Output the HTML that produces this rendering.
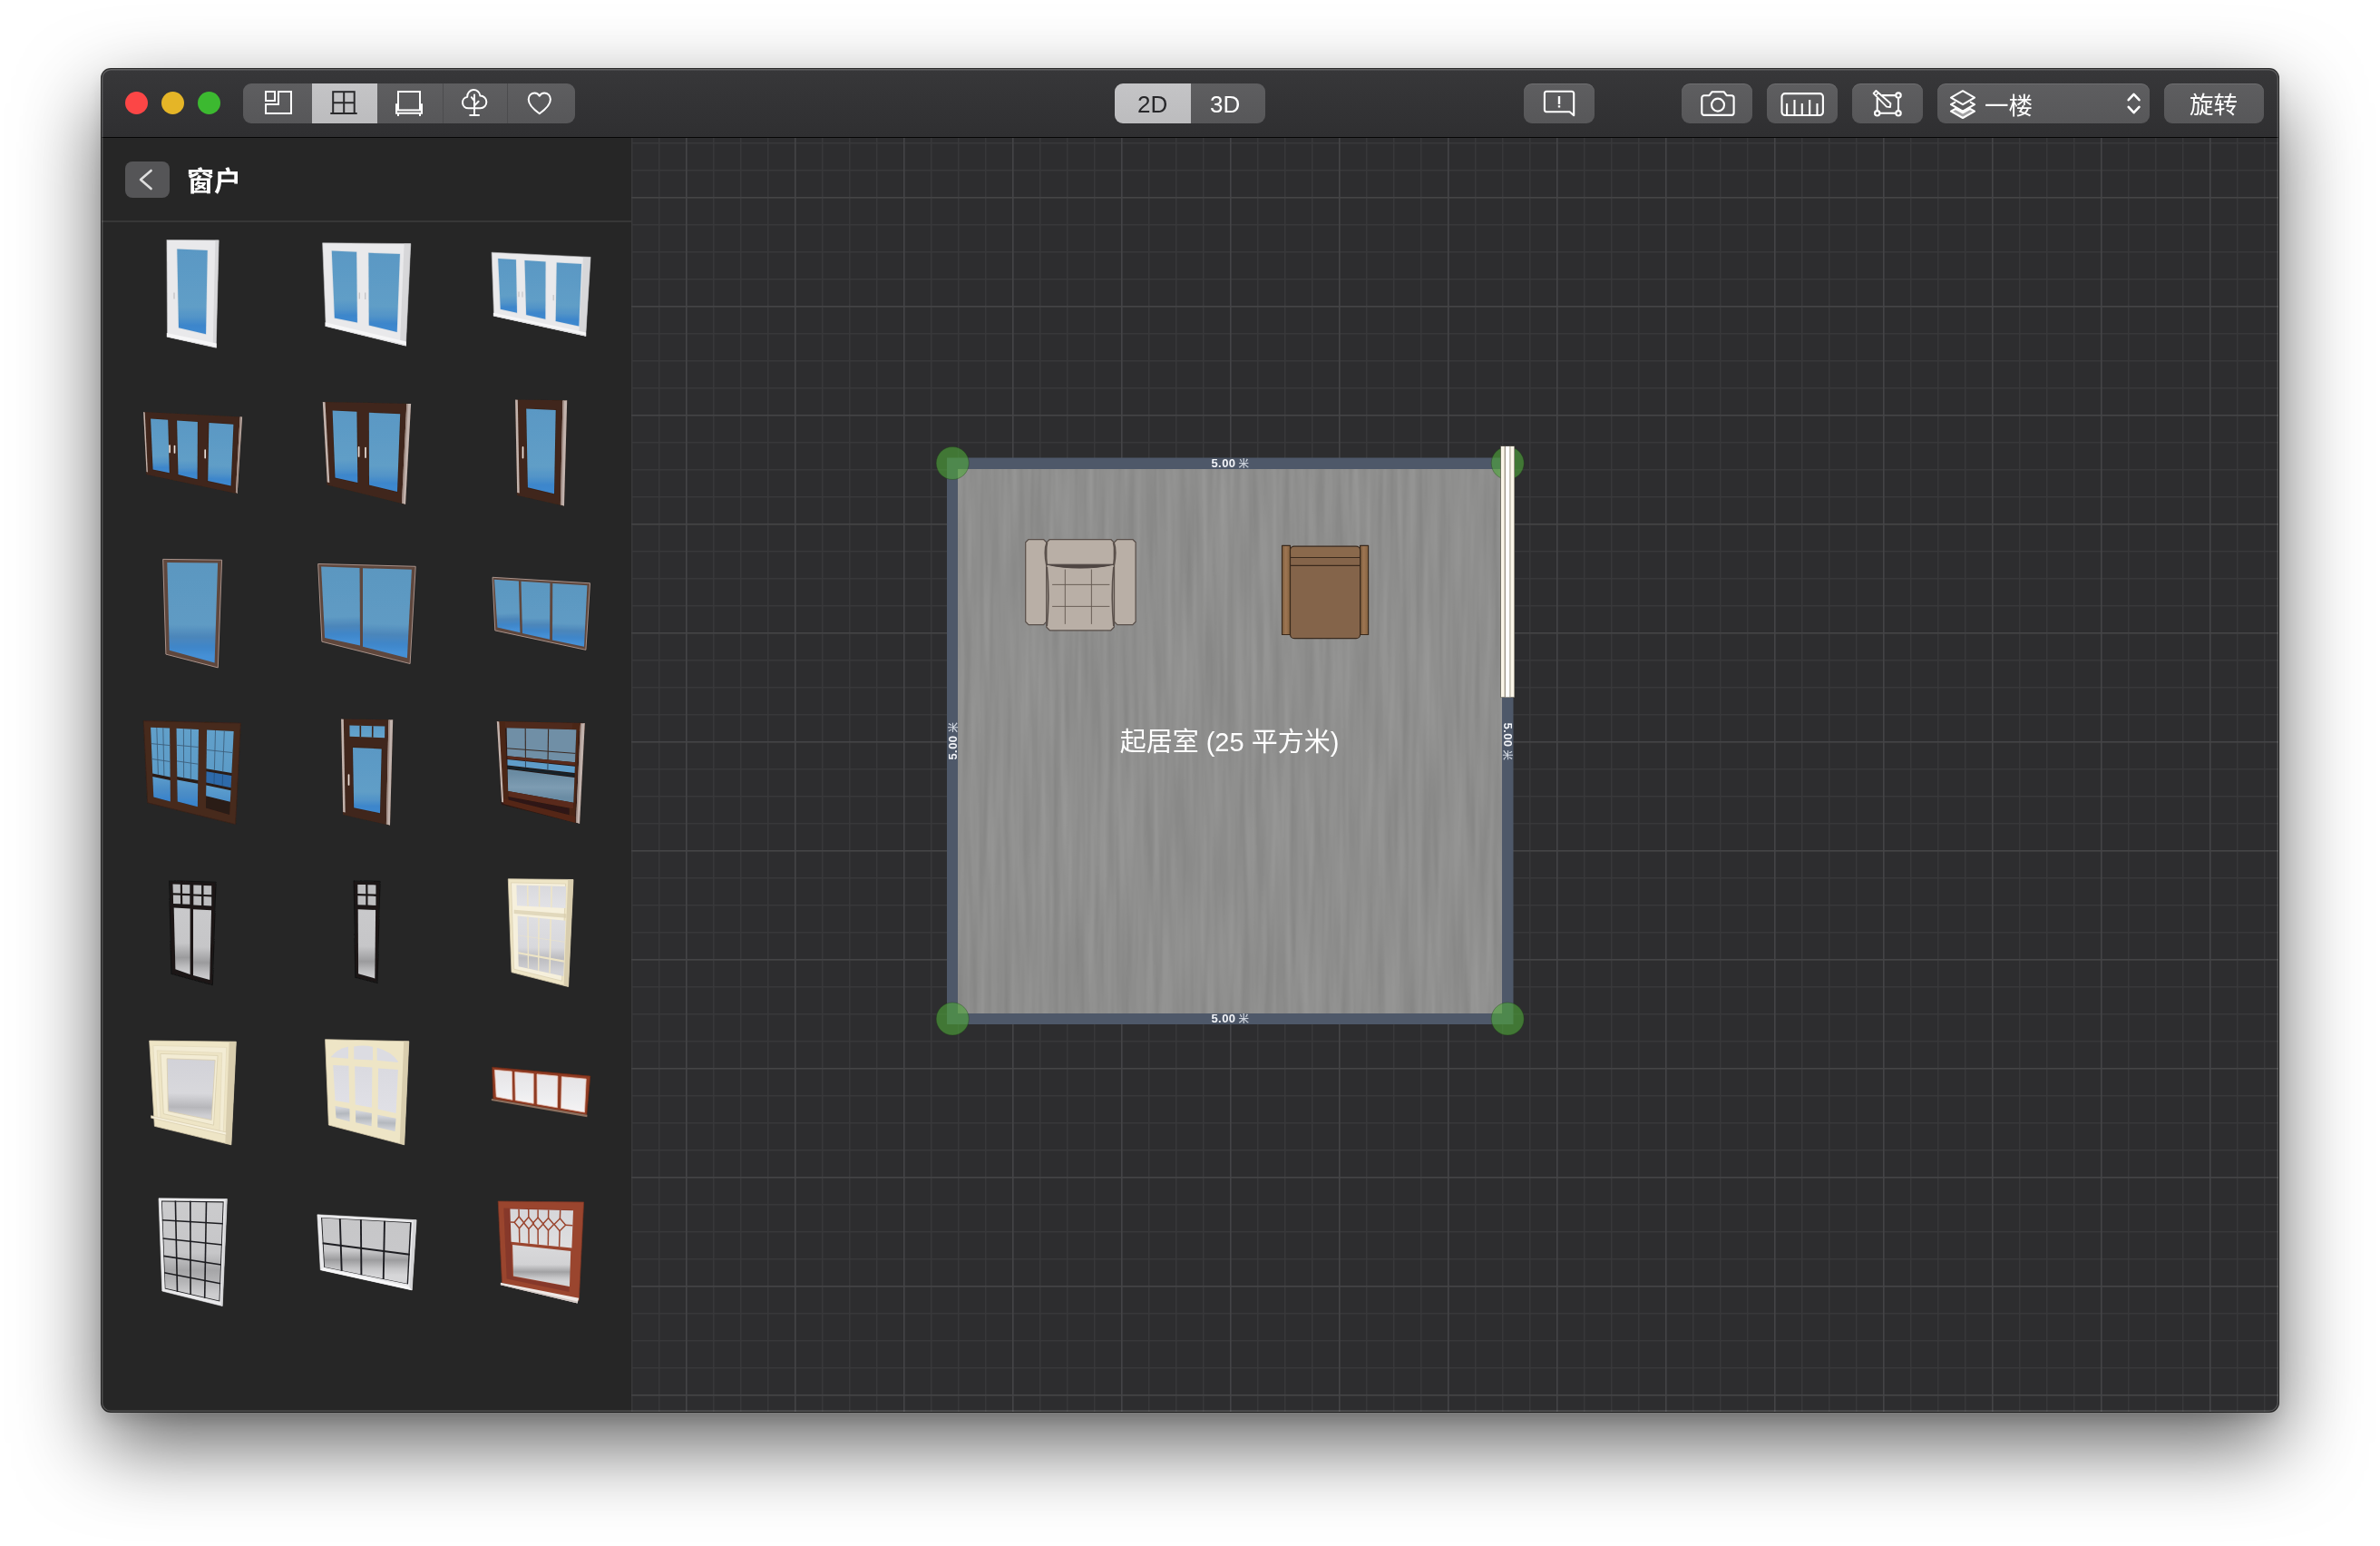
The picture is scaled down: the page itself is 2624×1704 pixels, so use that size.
<!DOCTYPE html>
<html lang="zh-CN">
<head>
<meta charset="utf-8">
<title>窗户</title>
<style>
html,body{margin:0;padding:0;background:#fff;}
body{width:2624px;height:1704px;position:relative;overflow:hidden;
  font-family:"Liberation Sans","Noto Sans CJK SC",sans-serif;color:#fff;}
#win{position:absolute;left:112px;top:76px;width:2400px;height:1480px;border-radius:10px;
  background:#2d2d2f;overflow:hidden;
  box-shadow:0 0 0 1px rgba(0,0,0,.82),0 36px 90px rgba(0,0,0,.62),0 8px 16px rgba(0,0,0,.10);}
/* page-coordinate layer: children use absolute page coords */
.pg{position:absolute;left:-112px;top:-76px;width:2624px;height:1704px;}
.abs{position:absolute;}
/* toolbar */
#tb{position:absolute;left:112px;top:76px;width:2400px;height:75px;
  background:linear-gradient(#373739,#2f2f31);border-bottom:1.3px solid #060606;}
.tl{position:absolute;width:25px;height:25px;border-radius:50%;top:101px;}
.btn{position:absolute;top:92px;height:44px;border-radius:9px;background:linear-gradient(#5e5e60,#575759);box-shadow:inset 0 1px 0 rgba(255,255,255,.10);}
.seg{position:absolute;top:92px;height:44px;background:linear-gradient(#5e5e60,#575759);}
.seg.on{background:linear-gradient(#c4c4c6,#bcbcbe);}
.btn svg,.seg svg{position:absolute;left:0;top:0;overflow:visible;}
.t26{font-size:26px;line-height:44px;position:absolute;top:1px;will-change:transform;white-space:nowrap;}
/* sidebar */
#sb{position:absolute;left:112px;top:152px;width:584px;height:1404px;background:#262626;}
#sbsep{position:absolute;left:112px;top:243px;width:584px;height:2px;background:#373737;}
#back{position:absolute;left:138px;top:178px;width:49px;height:40px;border-radius:8px;background:#555557;}
#sbt{position:absolute;left:206px;top:178px;font-size:30px;line-height:44px;font-weight:700;
  font-family:"Liberation Sans","Noto Sans CJK SC",sans-serif;color:#fff;white-space:nowrap;will-change:transform;}
/* canvas */
#cv{position:absolute;left:696px;top:152px;width:1816px;height:1404px;background:#2d2d2f;}

#edge{position:absolute;left:0;top:0;width:2400px;height:1480px;border-radius:10px;box-shadow:inset 0 0 0 1.4px rgba(255,255,255,.2);pointer-events:none;}

</style>
</head>
<body>
<div id="win">
<div class="pg">
<div id="cv"></div>
<svg class="abs" style="left:696px;top:152px;will-change:transform" width="1816" height="1404" viewBox="696 152 1816 1404">
  <defs>
    <pattern id="gmin" x="756" y="217" width="30" height="30" patternUnits="userSpaceOnUse">
      <path d="M0 0.5H30M0.5 0V30" stroke="#38383a" stroke-width="1.8" fill="none"/>
    </pattern>
    <pattern id="gmaj" x="756" y="217" width="120" height="120" patternUnits="userSpaceOnUse">
      <path d="M0 0.5H120M0.5 0V120" stroke="#444446" stroke-width="2" fill="none"/>
    </pattern>
    <filter id="wood" x="0" y="0" width="100%" height="100%" color-interpolation-filters="sRGB">
      <feTurbulence type="fractalNoise" baseFrequency="0.13 0.006" numOctaves="2" seed="11" result="n"/>
      <feColorMatrix in="n" type="matrix" values="0.095 0 0 0 0.511  0.095 0 0 0 0.511  0.095 0 0 0 0.507  0 0 0 0 1"/>
    </filter>
    <linearGradient id="armg" x1="0" x2="1" y1="0" y2="0"><stop offset="0" stop-color="#80603f"/><stop offset=".45" stop-color="#9d7552"/><stop offset="1" stop-color="#84623f"/></linearGradient>
  </defs>
  <rect x="696" y="152" width="1816" height="1404" fill="url(#gmin)"/>
  <rect x="696" y="152" width="1816" height="1404" fill="url(#gmaj)"/>
  <!-- room -->
  <rect x="1044" y="504.5" width="624.5" height="624.5" fill="#4e5869"/>
  <!-- floor texture -->
  <rect x="1056" y="517" width="600" height="600" fill="#8f8f8e"/>
  <rect x="1056" y="517" width="600" height="600" filter="url(#wood)" opacity="1"/>
  <!-- corner handles -->
  <g fill="#4fa83b" fill-opacity=".6" stroke="#1c3a14" stroke-opacity=".35" stroke-width="1">
    <circle cx="1050.2" cy="510.5" r="18"/>
    <circle cx="1662.2" cy="510.5" r="18"/>
    <circle cx="1050.2" cy="1123" r="18"/>
    <circle cx="1662.2" cy="1123" r="18"/>
  </g>
  <!-- window in right wall -->
  <g>
    <rect x="1654.2" y="491.6" width="15.8" height="277.2" fill="#6e6a5e"/>
    <rect x="1655" y="492" width="14.3" height="276.2" fill="#fbf6e9"/>
    <rect x="1658.7" y="492" width="1.2" height="276.2" fill="#857f70"/>
    <rect x="1659.9" y="492" width="4.6" height="276.2" fill="#ffffff"/>
    <rect x="1664.4" y="492" width="1.1" height="276.2" fill="#aaa394"/>
  </g>
  <!-- armchair (beige) -->
  <g fill="#b9afa6" stroke="#5a504b" stroke-width="1.25" stroke-linejoin="round">
    <path d="M1134 594.5H1150.5L1153.8 597.8V685.3L1150.5 688.6H1134L1130.7 685.3V597.8Z"/>
    <path d="M1231.8 594.5H1248.8L1252.1 597.8V685.3L1248.8 688.6H1231.8L1228.5 685.3V597.8Z"/>
    <path d="M1157.3 594.5H1224.8L1228.3 598V691.3L1224.8 694.8H1157.3L1153.8 691.3V598Z"/>
    <path d="M1154 622.4C1152 612 1152 604 1154.4 598M1228.1 622.4C1230.1 612 1230.1 604 1227.7 598" fill="none" stroke-width="2.2"/>
    <path d="M1154.2 622.2H1227.9C1206 627.4 1176 627.4 1154.2 622.2Z" fill="#4e4542" stroke="#4e4542" stroke-width="1"/>
    <path d="M1154.3 625C1156.3 645 1156.3 668 1154.3 690M1227.8 625C1225.8 645 1225.8 668 1227.8 690" fill="none" stroke-width="1.6"/>
    <path d="M1174.3 628V687.5M1203.4 628V687.5M1160.5 644.4H1223M1160.5 668.4H1223" fill="none" stroke="#62574f" stroke-width="0.9" stroke-linecap="round"/>
  </g>
  <!-- chair (brown) -->
  <g stroke="#3a291c" stroke-width="1.2" stroke-linejoin="round">
    <rect x="1413.5" y="601.3" width="9" height="98.2" fill="url(#armg)"/>
    <rect x="1499.6" y="601.3" width="9" height="98.2" fill="url(#armg)"/>
    <rect x="1422.5" y="602.2" width="77.1" height="101.5" rx="4.5" fill="#84644a"/>
    <path d="M1422.5 614.5H1499.6M1422.5 623.4H1499.6" fill="none"/>
  </g>
  <rect x="1423.2" y="603" width="75.7" height="11" rx="3.5" fill="#8e6c4e" opacity=".6"/>
  <!-- dimension labels -->
  <g font-family="'Liberation Sans','Noto Sans CJK SC',sans-serif" font-weight="700" font-size="13" letter-spacing=".45" fill="#f2f4f8" text-anchor="middle">
    <text x="1356.5" y="515">5.00 <tspan font-size="11.5" font-weight="500" fill="#cdd3dc" dx="-1">米</tspan></text>
    <text x="1356.5" y="1127.4">5.00 <tspan font-size="11.5" font-weight="500" fill="#cdd3dc" dx="-1">米</tspan></text>
    <text transform="translate(1054.6 816.5) rotate(-90)">5.00 <tspan font-size="11.5" font-weight="500" fill="#cdd3dc" dx="-1">米</tspan></text>
    <text transform="translate(1657.8 817.5) rotate(90)">5.00 <tspan font-size="11.5" font-weight="500" fill="#cdd3dc" dx="-1">米</tspan></text>
  </g>
  <text x="1355.5" y="827.8" font-family="'Liberation Sans','Noto Sans CJK SC',sans-serif" font-weight="400" font-size="29" fill="#fff" text-anchor="middle">起居室 (25 平方米)</text>

</svg>
</div>

<div class="pg">
<div id="sb"></div>
<div id="sbsep"></div>
<div id="back"><svg width="49" height="40"><path d="M28.6 10 L17 20 L28.6 30" fill="none" stroke="#dedede" stroke-width="2.6" stroke-linecap="round" stroke-linejoin="round"/></svg></div>
<div id="sbt">窗户</div>
</div>

<div class="pg"><svg class="abs" style="left:112px;top:244px" width="584" height="1312" viewBox="112 244 584 1312"><defs><linearGradient id="g1" gradientUnits="userSpaceOnUse" x1="212" y1="275.3" x2="212" y2="364.7"><stop offset="0" stop-color="#5a98c4"/><stop offset="0.7" stop-color="#609ec7"/><stop offset="0.84" stop-color="#5193c8"/><stop offset="0.93" stop-color="#3d86cb"/><stop offset="1" stop-color="#3e88cf"/></linearGradient><linearGradient id="g2" gradientUnits="userSpaceOnUse" x1="379.5" y1="277.1" x2="381.4" y2="353.1"><stop offset="0" stop-color="#5a98c4"/><stop offset="0.7" stop-color="#609ec7"/><stop offset="0.84" stop-color="#5193c8"/><stop offset="0.93" stop-color="#3d86cb"/><stop offset="1" stop-color="#3e88cf"/></linearGradient><linearGradient id="g3" gradientUnits="userSpaceOnUse" x1="423.7" y1="279.4" x2="422.3" y2="362.2"><stop offset="0" stop-color="#5a98c4"/><stop offset="0.7" stop-color="#609ec7"/><stop offset="0.84" stop-color="#5193c8"/><stop offset="0.93" stop-color="#3d86cb"/><stop offset="1" stop-color="#3e88cf"/></linearGradient><linearGradient id="g4" gradientUnits="userSpaceOnUse" x1="559" y1="285.6" x2="560.9" y2="342.8"><stop offset="0" stop-color="#5a98c4"/><stop offset="0.7" stop-color="#609ec7"/><stop offset="0.84" stop-color="#5193c8"/><stop offset="0.93" stop-color="#3d86cb"/><stop offset="1" stop-color="#3e88cf"/></linearGradient><linearGradient id="g5" gradientUnits="userSpaceOnUse" x1="590" y1="287.8" x2="590.8" y2="349.4"><stop offset="0" stop-color="#5a98c4"/><stop offset="0.7" stop-color="#609ec7"/><stop offset="0.84" stop-color="#5193c8"/><stop offset="0.93" stop-color="#3d86cb"/><stop offset="1" stop-color="#3e88cf"/></linearGradient><linearGradient id="g6" gradientUnits="userSpaceOnUse" x1="627.5" y1="290.2" x2="625.5" y2="356.8"><stop offset="0" stop-color="#5a98c4"/><stop offset="0.7" stop-color="#609ec7"/><stop offset="0.84" stop-color="#5193c8"/><stop offset="0.93" stop-color="#3d86cb"/><stop offset="1" stop-color="#3e88cf"/></linearGradient><linearGradient id="g7" gradientUnits="userSpaceOnUse" x1="175.6" y1="462.2" x2="177.7" y2="519.3"><stop offset="0" stop-color="#5a98c4"/><stop offset="0.7" stop-color="#609ec7"/><stop offset="0.84" stop-color="#5193c8"/><stop offset="0.93" stop-color="#3d86cb"/><stop offset="1" stop-color="#3e88cf"/></linearGradient><linearGradient id="g8" gradientUnits="userSpaceOnUse" x1="206.5" y1="464.3" x2="207" y2="525.7"><stop offset="0" stop-color="#5a98c4"/><stop offset="0.7" stop-color="#609ec7"/><stop offset="0.84" stop-color="#5193c8"/><stop offset="0.93" stop-color="#3d86cb"/><stop offset="1" stop-color="#3e88cf"/></linearGradient><linearGradient id="g9" gradientUnits="userSpaceOnUse" x1="243.9" y1="466.8" x2="241.9" y2="532.8"><stop offset="0" stop-color="#5a98c4"/><stop offset="0.7" stop-color="#609ec7"/><stop offset="0.84" stop-color="#5193c8"/><stop offset="0.93" stop-color="#3d86cb"/><stop offset="1" stop-color="#3e88cf"/></linearGradient><linearGradient id="g10" gradientUnits="userSpaceOnUse" x1="380" y1="453.1" x2="381.9" y2="529.2"><stop offset="0" stop-color="#5a98c4"/><stop offset="0.7" stop-color="#609ec7"/><stop offset="0.84" stop-color="#5193c8"/><stop offset="0.93" stop-color="#3d86cb"/><stop offset="1" stop-color="#3e88cf"/></linearGradient><linearGradient id="g11" gradientUnits="userSpaceOnUse" x1="424" y1="455.6" x2="422.5" y2="538.2"><stop offset="0" stop-color="#5a98c4"/><stop offset="0.7" stop-color="#609ec7"/><stop offset="0.84" stop-color="#5193c8"/><stop offset="0.93" stop-color="#3d86cb"/><stop offset="1" stop-color="#3e88cf"/></linearGradient><linearGradient id="g12" gradientUnits="userSpaceOnUse" x1="596.5" y1="451.3" x2="596.5" y2="540.7"><stop offset="0" stop-color="#5a98c4"/><stop offset="0.7" stop-color="#609ec7"/><stop offset="0.84" stop-color="#5193c8"/><stop offset="0.93" stop-color="#3d86cb"/><stop offset="1" stop-color="#3e88cf"/></linearGradient><linearGradient id="g13" gradientUnits="userSpaceOnUse" x1="212.2" y1="620.3" x2="211.7" y2="723.6"><stop offset="0" stop-color="#5b97c0"/><stop offset="0.66" stop-color="#5f9bc4"/><stop offset="0.79" stop-color="#4c86ba"/><stop offset="0.9" stop-color="#3f86c9"/><stop offset="1" stop-color="#4590d6"/></linearGradient><linearGradient id="g14" gradientUnits="userSpaceOnUse" x1="375.3" y1="625.2" x2="377.5" y2="707.4"><stop offset="0" stop-color="#5b97c0"/><stop offset="0.66" stop-color="#5f9bc4"/><stop offset="0.79" stop-color="#4c86ba"/><stop offset="0.9" stop-color="#3f86c9"/><stop offset="1" stop-color="#4590d6"/></linearGradient><linearGradient id="g15" gradientUnits="userSpaceOnUse" x1="426.9" y1="627" x2="424.4" y2="719"><stop offset="0" stop-color="#5b97c0"/><stop offset="0.66" stop-color="#5f9bc4"/><stop offset="0.79" stop-color="#4c86ba"/><stop offset="0.9" stop-color="#3f86c9"/><stop offset="1" stop-color="#4590d6"/></linearGradient><linearGradient id="g16" gradientUnits="userSpaceOnUse" x1="558.4" y1="639.6" x2="560.9" y2="694.3"><stop offset="0" stop-color="#5b97c0"/><stop offset="0.66" stop-color="#5f9bc4"/><stop offset="0.79" stop-color="#4c86ba"/><stop offset="0.9" stop-color="#3f86c9"/><stop offset="1" stop-color="#4590d6"/></linearGradient><linearGradient id="g17" gradientUnits="userSpaceOnUse" x1="590.5" y1="641.7" x2="591" y2="701.4"><stop offset="0" stop-color="#5b97c0"/><stop offset="0.66" stop-color="#5f9bc4"/><stop offset="0.79" stop-color="#4c86ba"/><stop offset="0.9" stop-color="#3f86c9"/><stop offset="1" stop-color="#4590d6"/></linearGradient><linearGradient id="g18" gradientUnits="userSpaceOnUse" x1="628.3" y1="644.1" x2="626.5" y2="709.1"><stop offset="0" stop-color="#5b97c0"/><stop offset="0.66" stop-color="#5f9bc4"/><stop offset="0.79" stop-color="#4c86ba"/><stop offset="0.9" stop-color="#3f86c9"/><stop offset="1" stop-color="#4590d6"/></linearGradient><linearGradient id="g19" gradientUnits="userSpaceOnUse" x1="176.6" y1="802.2" x2="177.9" y2="854.5"><stop offset="0" stop-color="#62a0ca"/><stop offset="1" stop-color="#5c9cc8"/></linearGradient><linearGradient id="g20" gradientUnits="userSpaceOnUse" x1="178" y1="857.9" x2="178.6" y2="881.1"><stop offset="0" stop-color="#5a9aca"/><stop offset="0.55" stop-color="#4a8cc6"/><stop offset="1" stop-color="#3a84cc"/></linearGradient><linearGradient id="g21" gradientUnits="userSpaceOnUse" x1="206.8" y1="803.4" x2="206.8" y2="858"><stop offset="0" stop-color="#62a0ca"/><stop offset="1" stop-color="#5c9cc8"/></linearGradient><linearGradient id="g22" gradientUnits="userSpaceOnUse" x1="206.8" y1="861.6" x2="206.8" y2="886.5"><stop offset="0" stop-color="#5a9aca"/><stop offset="0.55" stop-color="#4a8cc6"/><stop offset="1" stop-color="#3a84cc"/></linearGradient><linearGradient id="g23" gradientUnits="userSpaceOnUse" x1="242.9" y1="805.3" x2="241.5" y2="849.6"><stop offset="0" stop-color="#62a0ca"/><stop offset="1" stop-color="#5c9cc8"/></linearGradient><linearGradient id="g24" gradientUnits="userSpaceOnUse" x1="240.9" y1="868.3" x2="240.5" y2="880.5"><stop offset="0" stop-color="#5d9dcc"/><stop offset="1" stop-color="#4f92ca"/></linearGradient><linearGradient id="g25" gradientUnits="userSpaceOnUse" x1="404.9" y1="824.6" x2="404.6" y2="893.2"><stop offset="0" stop-color="#5a98c4"/><stop offset="0.7" stop-color="#609ec7"/><stop offset="0.84" stop-color="#5193c8"/><stop offset="0.93" stop-color="#3d86cb"/><stop offset="1" stop-color="#3e88cf"/></linearGradient><linearGradient id="g26" gradientUnits="userSpaceOnUse" x1="404.9" y1="800.1" x2="404.9" y2="812.5"><stop offset="0" stop-color="#5b9bc8"/><stop offset="1" stop-color="#65a3cc"/></linearGradient><linearGradient id="g27" gradientUnits="userSpaceOnUse" x1="596.5" y1="852.3" x2="596.2" y2="878.3"><stop offset="0" stop-color="#6a8ba2"/><stop offset="0.6" stop-color="#7d9cb2"/><stop offset="1" stop-color="#6b8ca4"/></linearGradient><linearGradient id="g28" gradientUnits="userSpaceOnUse" x1="200.6" y1="1000.9" x2="201.5" y2="1071"><stop offset="0" stop-color="#c9c9cb"/><stop offset="0.55" stop-color="#c6c6c8"/><stop offset="0.78" stop-color="#9b9b9d"/><stop offset="0.92" stop-color="#bdbdbf"/><stop offset="1" stop-color="#cbcbcd"/></linearGradient><linearGradient id="g29" gradientUnits="userSpaceOnUse" x1="223" y1="1002.7" x2="222.1" y2="1077.6"><stop offset="0" stop-color="#c9c9cb"/><stop offset="0.55" stop-color="#c6c6c8"/><stop offset="0.78" stop-color="#9b9b9d"/><stop offset="0.92" stop-color="#bdbdbf"/><stop offset="1" stop-color="#cbcbcd"/></linearGradient><linearGradient id="g30" gradientUnits="userSpaceOnUse" x1="404.4" y1="1002.6" x2="404.2" y2="1075.9"><stop offset="0" stop-color="#c9c9cb"/><stop offset="0.55" stop-color="#c6c6c8"/><stop offset="0.78" stop-color="#9b9b9d"/><stop offset="0.92" stop-color="#bdbdbf"/><stop offset="1" stop-color="#cbcbcd"/></linearGradient><linearGradient id="g31" gradientUnits="userSpaceOnUse" x1="596.7" y1="976.4" x2="596.7" y2="999.6"><stop offset="0" stop-color="#d9d9dd"/><stop offset="1" stop-color="#e2e2e6"/></linearGradient><linearGradient id="g32" gradientUnits="userSpaceOnUse" x1="597" y1="1012.1" x2="596.5" y2="1070.7"><stop offset="0" stop-color="#dedee2"/><stop offset="0.55" stop-color="#d8d8dc"/><stop offset="0.75" stop-color="#bcbcc0"/><stop offset="1" stop-color="#d2d2d6"/></linearGradient><linearGradient id="g33" gradientUnits="userSpaceOnUse" x1="210.6" y1="1167.6" x2="209.3" y2="1229.7"><stop offset="0" stop-color="#d2d2d8"/><stop offset="0.6" stop-color="#d8d8dc"/><stop offset="0.85" stop-color="#b6b6ba"/><stop offset="1" stop-color="#cfcfd3"/></linearGradient><linearGradient id="g34" gradientUnits="userSpaceOnUse" x1="375.8" y1="1174.4" x2="377.3" y2="1214.3"><stop offset="0" stop-color="#dadae0"/><stop offset="1" stop-color="#e0e0e6"/></linearGradient><linearGradient id="g35" gradientUnits="userSpaceOnUse" x1="400.8" y1="1175.9" x2="400.8" y2="1219.1"><stop offset="0" stop-color="#dadae0"/><stop offset="1" stop-color="#e0e0e6"/></linearGradient><linearGradient id="g36" gradientUnits="userSpaceOnUse" x1="428" y1="1178.2" x2="426.6" y2="1224.8"><stop offset="0" stop-color="#dadae0"/><stop offset="1" stop-color="#e0e0e6"/></linearGradient><linearGradient id="g37" gradientUnits="userSpaceOnUse" x1="377.4" y1="1220.6" x2="378.1" y2="1234.2"><stop offset="0" stop-color="#d2d4da"/><stop offset="0.5" stop-color="#b4b8be"/><stop offset="1" stop-color="#cfd1d6"/></linearGradient><linearGradient id="g38" gradientUnits="userSpaceOnUse" x1="400.9" y1="1225.4" x2="400.9" y2="1239.3"><stop offset="0" stop-color="#d2d4da"/><stop offset="0.5" stop-color="#b4b8be"/><stop offset="1" stop-color="#cfd1d6"/></linearGradient><linearGradient id="g39" gradientUnits="userSpaceOnUse" x1="426.5" y1="1230.8" x2="425.9" y2="1244.7"><stop offset="0" stop-color="#d2d4da"/><stop offset="0.5" stop-color="#b4b8be"/><stop offset="1" stop-color="#cfd1d6"/></linearGradient><linearGradient id="g40" gradientUnits="userSpaceOnUse" x1="554.9" y1="1180.2" x2="556.1" y2="1210.6"><stop offset="0" stop-color="#e6e4e6"/><stop offset="0.7" stop-color="#ededef"/><stop offset="1" stop-color="#f4f2f3"/></linearGradient><linearGradient id="g41" gradientUnits="userSpaceOnUse" x1="578" y1="1182.5" x2="578.2" y2="1214.5"><stop offset="0" stop-color="#e6e4e6"/><stop offset="0.7" stop-color="#ededef"/><stop offset="1" stop-color="#f4f2f3"/></linearGradient><linearGradient id="g42" gradientUnits="userSpaceOnUse" x1="603.5" y1="1185" x2="603.3" y2="1218.9"><stop offset="0" stop-color="#e6e4e6"/><stop offset="0.7" stop-color="#ededef"/><stop offset="1" stop-color="#f4f2f3"/></linearGradient><linearGradient id="g43" gradientUnits="userSpaceOnUse" x1="632.8" y1="1188" x2="631.6" y2="1223.7"><stop offset="0" stop-color="#e6e4e6"/><stop offset="0.7" stop-color="#ededef"/><stop offset="1" stop-color="#f4f2f3"/></linearGradient><linearGradient id="g44" gradientUnits="userSpaceOnUse" x1="212.2" y1="1325" x2="212" y2="1426.6"><stop offset="0" stop-color="#cbcbcd"/><stop offset="0.55" stop-color="#c6c6c8"/><stop offset="0.74" stop-color="#a6a6a8"/><stop offset="0.86" stop-color="#b4b4b6"/><stop offset="1" stop-color="#cdcdcf"/></linearGradient><linearGradient id="g45" gradientUnits="userSpaceOnUse" x1="403.6" y1="1345.3" x2="403.4" y2="1405.6"><stop offset="0" stop-color="#c6c6c8"/><stop offset="0.55" stop-color="#c8c8ca"/><stop offset="0.72" stop-color="#9c9c9e"/><stop offset="0.88" stop-color="#c4c4c6"/><stop offset="1" stop-color="#d6d6d8"/></linearGradient><linearGradient id="g46" gradientUnits="userSpaceOnUse" x1="597.2" y1="1333.4" x2="597" y2="1372.1"><stop offset="0" stop-color="#d6d6da"/><stop offset="1" stop-color="#dededf"/></linearGradient><linearGradient id="g47" gradientUnits="userSpaceOnUse" x1="597.1" y1="1375.4" x2="597" y2="1412.2"><stop offset="0" stop-color="#d8d8da"/><stop offset="0.5" stop-color="#d2d2d4"/><stop offset="0.72" stop-color="#a2a2a4"/><stop offset="0.9" stop-color="#c6c6c8"/><stop offset="1" stop-color="#d4d4d6"/></linearGradient><filter id="tb1" x="-5%" y="-5%" width="110%" height="110%"><feGaussianBlur stdDeviation="0.6"/></filter></defs><g filter="url(#tb1)"><g><polygon points="183.9,264.4 241.2,264.8 238.2,383.3 184.5,371.3" fill="#e9e9eb" stroke="#bdbdc0" stroke-width="0.6" stroke-linejoin="round"/><polygon points="237.4,264.8 241.2,264.8 238.2,383.3 234.7,382.5" fill="#cfcfd2" opacity="0.7"/><polygon points="183.8,367 238.7,378.5 238.7,383.3 183.8,371.3" fill="#f6f6f7"/><polygon points="183.8,370.7 238.7,382.4 238.7,383.3 183.8,371.3" fill="#d9d9db"/><polygon points="195.3,274.6 228.7,276 227,368.2 197,361.3" fill="#dfe6ec" stroke="#d4dbe2" stroke-width="1.4" stroke-linejoin="round"/><polygon points="195.3,274.6 228.7,276 227,368.2 197,361.3" fill="url(#g1)"/><line x1="192" y1="322.6" x2="192" y2="329.5" stroke="#bfbfc2" stroke-width="1.2"/></g>
<g><polygon points="355.6,267.8 452.8,268.6 447.4,381.2 359.2,359.6" fill="#e9e9eb" stroke="#bdbdc0" stroke-width="0.6" stroke-linejoin="round"/><polygon points="445.6,268.5 452.8,268.6 447.4,381.2 441,379.7" fill="#cfcfd2" opacity="0.7"/><polygon points="358.5,355.3 447.9,376.5 447.9,381.2 358.5,359.6" fill="#f6f6f7"/><polygon points="358.5,358.9 447.9,380.3 447.9,381.2 358.5,359.6" fill="#d9d9db"/><polygon points="365.8,276.5 393.1,277.7 393.9,355.6 368.9,350.5" fill="#dfe6ec" stroke="#d4dbe2" stroke-width="1.4" stroke-linejoin="round"/><polygon points="365.8,276.5 393.1,277.7 393.9,355.6 368.9,350.5" fill="url(#g2)"/><polygon points="406.4,278.8 440.9,280 437.7,365.9 406.8,358.5" fill="#dfe6ec" stroke="#d4dbe2" stroke-width="1.4" stroke-linejoin="round"/><polygon points="406.4,278.8 440.9,280 437.7,365.9 406.8,358.5" fill="url(#g3)"/><line x1="396.3" y1="322.6" x2="396.3" y2="329.5" stroke="#c4c4c7" stroke-width="1.3"/><line x1="402.7" y1="322.6" x2="402.7" y2="330" stroke="#c4c4c7" stroke-width="1.3"/></g>
<g><polygon points="542.1,278.2 651.1,283.4 645.7,370.4 544.6,348.2" fill="#e9e9eb" stroke="#bdbdc0" stroke-width="0.6" stroke-linejoin="round"/><polygon points="643,283 651.1,283.4 645.7,370.4 638.2,368.8" fill="#cfcfd2" opacity="0.7"/><polygon points="543.9,344.8 646.1,366.6 646.1,370.4 543.9,348.2" fill="#f6f6f7"/><polygon points="543.9,347.6 646.1,369.5 646.1,370.4 543.9,348.2" fill="#d9d9db"/><polygon points="549.2,285.1 568.9,286.2 570,344.8 551.8,340.8" fill="#dfe6ec" stroke="#d4dbe2" stroke-width="1.4" stroke-linejoin="round"/><polygon points="549.2,285.1 568.9,286.2 570,344.8 551.8,340.8" fill="url(#g4)"/><polygon points="578.5,287.1 601.5,288.5 601.3,351.7 580.2,347.1" fill="#dfe6ec" stroke="#d4dbe2" stroke-width="1.4" stroke-linejoin="round"/><polygon points="578.5,287.1 601.5,288.5 601.3,351.7 580.2,347.1" fill="url(#g5)"/><polygon points="613.8,289.4 641.1,291 638.3,359.6 612.7,353.9" fill="#dfe6ec" stroke="#d4dbe2" stroke-width="1.4" stroke-linejoin="round"/><polygon points="613.8,289.4 641.1,291 638.3,359.6 612.7,353.9" fill="url(#g6)"/><line x1="572" y1="321.5" x2="572" y2="327.2" stroke="#c4c4c7" stroke-width="1.2"/><line x1="576" y1="321.5" x2="576" y2="327.4" stroke="#c4c4c7" stroke-width="1.2"/><line x1="610.2" y1="324.9" x2="610.2" y2="331.2" stroke="#c4c4c7" stroke-width="1.2"/></g>
<g><polygon points="158.1,454 267.1,459.4 261.7,544.2 161.3,523.1" fill="#3f251a"/><polygon points="158.1,454 159.7,454.4 162.9,520.6 161.5,520.1" fill="#c2b3ad"/><polygon points="264.6,459.6 267.1,459.4 261.7,544.2 259.9,542.6" fill="#c2b3ad"/><polygon points="264.6,459.6 266.2,459.6 261.5,543 259.9,542.6" fill="#a08c84"/><polygon points="166.1,461.6 185.2,462.8 186.8,521.2 168.6,517.4" fill="#3a2219" stroke="#3a2219" stroke-width="1.2" stroke-linejoin="round"/><polygon points="166.1,461.6 185.2,462.8 186.8,521.2 168.6,517.4" fill="url(#g7)"/><polygon points="195.1,463.6 217.9,465.1 217.6,528.2 196.5,523.1" fill="#3a2219" stroke="#3a2219" stroke-width="1.2" stroke-linejoin="round"/><polygon points="195.1,463.6 217.9,465.1 217.6,528.2 196.5,523.1" fill="url(#g8)"/><polygon points="230.4,465.9 257.4,467.7 254.6,535.6 229.2,529.9" fill="#3a2219" stroke="#3a2219" stroke-width="1.2" stroke-linejoin="round"/><polygon points="230.4,465.9 257.4,467.7 254.6,535.6 229.2,529.9" fill="url(#g9)"/><line x1="187.1" y1="491.2" x2="187.1" y2="498.4" stroke="#eadfd9" stroke-width="1.7" stroke-linecap="round"/><line x1="192.5" y1="491.6" x2="192.5" y2="498.9" stroke="#eadfd9" stroke-width="1.7" stroke-linecap="round"/><line x1="226.2" y1="496.1" x2="226.2" y2="504.6" stroke="#eadfd9" stroke-width="1.7" stroke-linecap="round"/></g>
<g><polygon points="355.8,442.9 453.1,444.9 447.1,556.1 360.6,534.5" fill="#3f251a"/><polygon points="355.8,442.9 358.5,443.2 363.3,532 360.8,531.5" fill="#c2b3ad"/><polygon points="448.3,445.1 453.1,444.9 447.1,556.1 443,554.5" fill="#c2b3ad"/><polygon points="448.3,445.1 449.9,445.1 444.6,555 443,554.5" fill="#a08c84"/><polygon points="366.6,452.5 393.4,453.7 394.3,531.9 369.5,526.5" fill="#3a2219" stroke="#3a2219" stroke-width="1.2" stroke-linejoin="round"/><polygon points="366.6,452.5 393.4,453.7 394.3,531.9 369.5,526.5" fill="url(#g10)"/><polygon points="406.8,454.8 441.2,456.3 438,541.9 407,534.5" fill="#3a2219" stroke="#3a2219" stroke-width="1.2" stroke-linejoin="round"/><polygon points="406.8,454.8 441.2,456.3 438,541.9 407,534.5" fill="url(#g11)"/><line x1="395.6" y1="492.9" x2="395.6" y2="503" stroke="#eadfd9" stroke-width="1.7" stroke-linecap="round"/><line x1="403" y1="493.5" x2="403" y2="504.1" stroke="#eadfd9" stroke-width="1.7" stroke-linecap="round"/></g>
<g><polygon points="568.1,440.4 625.2,441.2 622,557.8 570,545.9" fill="#3f251a"/><polygon points="568.1,440.4 570.8,440.7 572.7,543.4 570.2,542.9" fill="#c2b3ad"/><polygon points="620.4,441.4 625.2,441.2 622,557.8 617.9,556.2" fill="#c2b3ad"/><polygon points="620.4,441.4 622,441.4 619.5,556.7 617.9,556.2" fill="#a08c84"/><polygon points="580.2,450.6 612.7,452 611,544.2 581.9,537.3" fill="#3a2219" stroke="#3a2219" stroke-width="1.2" stroke-linejoin="round"/><polygon points="580.2,450.6 612.7,452 611,544.2 581.9,537.3" fill="url(#g12)"/><line x1="576.5" y1="492.9" x2="576.5" y2="504.6" stroke="#eadfd9" stroke-width="1.7" stroke-linecap="round"/></g>
<g><polygon points="179.7,616.4 244.6,617.2 240.3,735.9 182.9,721.1" fill="#5f473e" stroke="#a8928a" stroke-width="1.0" stroke-linejoin="round"/><polygon points="184.3,620 240.1,620.6 236.6,730.4 186.8,716.7" fill="url(#g13)"/></g>
<g><polygon points="350.7,621.5 458.2,624.3 452.1,731.5 354.9,707.2" fill="#5f473e" stroke="#a8928a" stroke-width="1.0" stroke-linejoin="round"/><polygon points="354.1,624.6 396.5,625.9 397,711.6 358.1,703.1" fill="url(#g14)"/><polygon points="400,626.3 453.9,627.7 448.9,725.3 400,712.8" fill="url(#g15)"/></g>
<g><polygon points="543,636.3 650.5,642.8 645.9,716.3 545.8,694.9" fill="#5f473e" stroke="#a8928a" stroke-width="1.0" stroke-linejoin="round"/><polygon points="545,638.8 571.9,640.5 573.4,697.2 548.4,691.5" fill="url(#g16)"/><polygon points="574.5,640.7 606.4,642.8 606.1,704.8 576,698" fill="url(#g17)"/><polygon points="609.3,643 647.4,645.3 644,712.8 609,705.4" fill="url(#g18)"/></g>
<g><polygon points="158.3,794.6 265.3,797.1 259.6,908.5 162.7,884.8" fill="#472a1d" stroke="#3a2116" stroke-width="0.8" stroke-linejoin="round"/><polygon points="166.1,801.7 187.1,802.6 187.9,883.6 169.3,878.5" fill="#2a1a14"/><polygon points="166.1,801.7 187.1,802.6 187.7,856.5 168.2,852.6" fill="url(#g19)"/><polygon points="168.3,855.9 187.7,859.9 187.9,883.6 169.3,878.5" fill="url(#g20)"/><line x1="172.8" y1="802" x2="174.4" y2="853.9" stroke="#3d5f7c" stroke-width="0.9"/><line x1="179.8" y1="802.3" x2="180.9" y2="855.1" stroke="#3d5f7c" stroke-width="0.9"/><line x1="166.8" y1="819.6" x2="187.3" y2="821.6" stroke="#3d5f7c" stroke-width="0.9"/><line x1="167.5" y1="836.5" x2="187.5" y2="839.5" stroke="#3d5f7c" stroke-width="0.9"/><polygon points="194.5,802.8 219,804 217.9,889.3 195.7,883.6" fill="#2a1a14"/><polygon points="194.5,802.8 219,804 218.3,860.1 195.3,855.9" fill="url(#g21)"/><polygon points="195.3,859.4 218.2,863.8 217.9,889.3 195.7,883.6" fill="url(#g22)"/><line x1="202.4" y1="803.2" x2="202.6" y2="857.3" stroke="#3d5f7c" stroke-width="0.9"/><line x1="210.5" y1="803.6" x2="210.3" y2="858.7" stroke="#3d5f7c" stroke-width="0.9"/><line x1="194.8" y1="821.3" x2="218.7" y2="823.5" stroke="#3d5f7c" stroke-width="0.9"/><line x1="195" y1="838.9" x2="218.5" y2="842.2" stroke="#3d5f7c" stroke-width="0.9"/><polygon points="228.1,804.5 257.7,806 253.1,897.9 227,890.5" fill="#2b1a13"/><polygon points="228.1,804.5 257.7,806 255.4,851.9 227.5,847.3" fill="url(#g23)"/><line x1="237.5" y1="805" x2="236.4" y2="848.8" stroke="#3d5f7c" stroke-width="0.9"/><line x1="247.3" y1="805.5" x2="245.7" y2="850.3" stroke="#3d5f7c" stroke-width="0.9"/><line x1="227.8" y1="826.5" x2="256.5" y2="829.6" stroke="#3d5f7c" stroke-width="0.9"/><polygon points="227.5,850.3 255.3,855.1 254.6,868.2 227.3,862.5" fill="#2f6ba9"/><line x1="236.3" y1="851.9" x2="236" y2="864.3" stroke="#234f7e" stroke-width="0.8"/><line x1="245.6" y1="853.5" x2="245.1" y2="866.2" stroke="#234f7e" stroke-width="0.8"/><polygon points="227.3,865.4 254.5,871.3 253.8,883.7 227.1,877.2" fill="url(#g24)"/></g>
<g><polygon points="376.1,792.4 433.2,793.2 430,909.8 378,897.9" fill="#3f251a"/><polygon points="376.1,792.4 378.8,792.7 380.7,895.4 378.2,894.9" fill="#c2b3ad"/><polygon points="428.4,793.4 433.2,793.2 430,909.8 425.9,908.2" fill="#c2b3ad"/><polygon points="428.4,793.4 430,793.4 427.5,908.7 425.9,908.2" fill="#a08c84"/><polygon points="389,823.9 420.7,825.4 419,896.2 390.2,890.2" fill="#3a2219" stroke="#3a2219" stroke-width="1.2" stroke-linejoin="round"/><polygon points="389,823.9 420.7,825.4 419,896.2 390.2,890.2" fill="url(#g25)"/><line x1="384.5" y1="854" x2="384.5" y2="865" stroke="#eadfd9" stroke-width="1.7" stroke-linecap="round"/><polygon points="385.4,799.6 424.3,800.6 424.1,813.3 385.6,811.7" fill="url(#g26)"/><polygon points="396.5,799.9 398.1,799.9 398.1,812.2 396.6,812.2" fill="#3a2219"/><polygon points="410,800.2 411.6,800.3 411.5,812.8 409.9,812.7" fill="#3a2219"/></g>
<g><polygon points="547.8,795.1 644.8,797.1 639.1,908.1 552.9,886.8" fill="#2e1912"/><polygon points="547.8,795.1 644.8,797.1 644.3,805.9 548.2,802.2" fill="#50291a"/><polygon points="550.2,795.1 556.6,795.3 560.7,884.6 554.8,883.2" fill="#4c2718"/><polygon points="631.3,796.9 638.8,797 634,903.9 627.5,902.3" fill="#4c2718"/><polygon points="547.8,795.1 550.3,795.4 555.2,884.6 553.1,884.1" fill="#c2b3ad"/><polygon points="640,797.4 644.8,797.1 639.1,908.1 635,906.5" fill="#c2b3ad"/><polygon points="640,797.4 641.4,797.4 636.3,907 635,906.5" fill="#a08c84"/><polygon points="555,880.2 634.5,899.9 634.5,907 555.2,886.1" fill="#552818"/><polygon points="558.6,802.3 635.4,804.2 632,891.6 560.3,877.9" fill="#241410"/><polygon points="558.6,802.3 635.4,804.2 634,840.3 559.3,833.3" fill="#6f8fa6"/><line x1="579.2" y1="802.8" x2="579.5" y2="845.9" stroke="#3b2a24" stroke-width="1.1"/><line x1="604.6" y1="803.4" x2="603.9" y2="848.7" stroke="#3b2a24" stroke-width="1.1"/><line x1="559.1" y1="824.8" x2="634.4" y2="830.4" stroke="#3b2a24" stroke-width="1.0"/><polygon points="559.3,833.3 634,840.3 633.9,843.8 559.4,836.4" fill="#5a2c1b"/><polygon points="559.4,837.1 633.9,844.7 633.6,852.1 559.5,843.6" fill="#5f9dca"/><line x1="579.4" y1="838.8" x2="579.5" y2="845.9" stroke="#2f4a60" stroke-width="1.0"/><line x1="604" y1="841.2" x2="603.9" y2="848.7" stroke="#2f4a60" stroke-width="1.0"/><polygon points="559.6,844.3 633.5,853 633.4,856 559.6,846.9" fill="#18242c"/><polygon points="559.6,847.7 633.4,856.9 632.3,884.7 560.2,871.9" fill="url(#g27)"/><polygon points="560.2,871.9 632.3,884.7 632,891.6 560.3,877.9" fill="#5a2c1b"/></g>
<g><polygon points="186.6,970.9 238,972 234.4,1085.8 188.8,1073.3" fill="#1b1919" stroke="#121111" stroke-width="0.8" stroke-linejoin="round"/><polygon points="190.5,974.5 198.8,974.8 198.9,984.6 190.8,984.3" fill="#bdbdbf"/><polygon points="190.9,986.4 198.9,986.8 199.1,996.3 191.1,995.9" fill="#bdbdbf"/><polygon points="201,974.9 209.3,975.2 209.3,985.1 201.1,984.7" fill="#bdbdbf"/><polygon points="201.1,986.9 209.3,987.3 209.3,996.8 201.3,996.4" fill="#bdbdbf"/><polygon points="213.3,975.4 222.1,975.8 222.1,985.8 213.3,985.4" fill="#bdbdbf"/><polygon points="213.3,987.6 222.1,988 222.1,998 213.3,997.6" fill="#bdbdbf"/><polygon points="224.5,975.9 233.2,976.3 233.2,986.3 224.5,985.9" fill="#bdbdbf"/><polygon points="224.5,988.1 233.2,988.5 233.2,998.4 224.5,998.1" fill="#bdbdbf"/><polygon points="191.7,1000.5 209.6,1001.4 209.6,1073.9 193.4,1068.2" fill="url(#g28)"/><polygon points="213,1002.2 233,1003.3 231.2,1080.1 213,1075" fill="url(#g29)"/></g>
<g><polygon points="390.2,970.9 419,971.4 416.1,1083.5 391.7,1077.3" fill="#1b1919" stroke="#121111" stroke-width="0.8" stroke-linejoin="round"/><polygon points="394.3,974.9 403.2,975.1 403.3,985.3 394.4,985" fill="#bdbdbf"/><polygon points="394.4,987.2 403.3,987.5 403.3,997.6 394.5,997.3" fill="#bdbdbf"/><polygon points="405.4,975.2 414.4,975.4 414.4,985.6 405.5,985.3" fill="#bdbdbf"/><polygon points="405.5,987.6 414.4,987.9 414.4,998 405.5,997.6" fill="#bdbdbf"/><polygon points="394.7,1002.2 414.1,1003 413.3,1078.4 395.1,1073.3" fill="url(#g30)"/></g>
<g><polygon points="560.3,968.8 632,969.5 626.6,1087.5 564,1071.6" fill="#eee5c6" stroke="#d8cdae" stroke-width="0.8" stroke-linejoin="round"/><polygon points="626.2,969.4 632,969.5 626.6,1087.5 621.6,1086.3" fill="#d8cdae"/><polygon points="563.5,972.9 623.6,974.1 619.6,1081.2 566.6,1068.2" fill="#f6f0dc" stroke="#d8cdae" stroke-width="0.7" stroke-linejoin="round"/><polygon points="569.4,975.6 624.1,977.1 623.5,1001 570,998.2" fill="url(#g31)"/><polygon points="580.9,976 582.4,976 582.7,998.9 581.3,998.8" fill="#eee5c6"/><polygon points="593.8,976.3 595.3,976.3 595.3,999.5 593.9,999.5" fill="#eee5c6"/><polygon points="607.3,976.7 608.9,976.7 608.6,1000.2 607.1,1000.2" fill="#eee5c6"/><polygon points="566.6,1002.7 624.3,1007.3 624.3,1011.8 566.6,1007.1" fill="#d8cdae" opacity="0.7"/><polygon points="570.6,1009.6 623.5,1014.7 621.2,1076.1 571.7,1065.3" fill="url(#g32)"/><polygon points="581.3,1010.6 582.7,1010.7 583.1,1067.8 581.8,1067.5" fill="#eee5c6"/><polygon points="593.3,1011.8 594.7,1011.9 594.4,1070.3 593,1070" fill="#eee5c6"/><polygon points="606.4,1013 608,1013.2 606.8,1073 605.3,1072.7" fill="#eee5c6"/><polygon points="571.4,1049.3 621.9,1058.6 621.8,1060.7 571.4,1051.2" fill="#eee5c6"/><polygon points="571,1030.4 622.6,1037.8 622.6,1038.7 571,1031.3" fill="#eee5c6" opacity="0.55"/></g>
<g><polygon points="164.7,1147.1 260.3,1148.2 254.9,1261.8 170.4,1241.3" fill="#eee5c6" stroke="#d8cdae" stroke-width="0.8" stroke-linejoin="round"/><polygon points="252.7,1148.1 260.3,1148.2 254.9,1261.8 248.3,1260.2" fill="#d8cdae"/><polygon points="168.9,1152.4 249.7,1154.4 246.2,1249.8 173.5,1233.6" fill="#f3ecd4" stroke="#e0d6b8" stroke-width="0.6" stroke-linejoin="round"/><polygon points="173.1,1157.8 244.8,1160.5 242.1,1246.7 177,1232.5" fill="#eee5c6" stroke="#e0d6b8" stroke-width="0.6" stroke-linejoin="round"/><polygon points="176.9,1161.4 240.1,1163.4 235.5,1240.2 180.3,1227.7" fill="#f3ecd4" stroke="#d6cbab" stroke-width="0.7" stroke-linejoin="round"/><polygon points="184.1,1166.8 237.2,1168.5 233.2,1234.5 185.4,1224.8" fill="url(#g33)" stroke="#d8cdae" stroke-width="0.8" stroke-linejoin="round"/><polygon points="166.6,1229.7 249.4,1247.9 249.4,1251.1 166.6,1232.2" fill="#f6f0dc" stroke="#d8cdae" stroke-width="0.7" stroke-linejoin="round"/></g>
<g><polygon points="358.6,1145.7 450.8,1147.8 445.7,1261.8 362.4,1240" fill="#eee5c6" stroke="#d8cdae" stroke-width="0.8" stroke-linejoin="round"/><polygon points="445.2,1147.7 450.8,1147.8 445.7,1261.8 440.7,1260.5" fill="#d8cdae"/><path d="M364.6 1165.3Q371.7 1156 384 1153.5L384 1166.8Z" fill="#dcdce2"/><path d="M390.2 1153.5Q400.8 1151.2 411 1153.9L411 1168.5L390.2 1167.6Z" fill="#dcdce2"/><path d="M415.6 1154.8Q430.9 1158.8 438.9 1169.9L438.9 1171L415.6 1168.7Z" fill="#dcdce2"/><polygon points="367.2,1174 384.5,1174.8 385.2,1215.7 369.5,1212.9" fill="url(#g34)"/><polygon points="391.1,1175.3 410.4,1176.5 409.9,1220.8 391.7,1217.4" fill="url(#g35)"/><polygon points="417,1177.4 438.9,1179 436.6,1227.1 416.7,1222.6" fill="url(#g36)"/><polygon points="369.5,1219.1 385.4,1222 385.6,1236.2 370.6,1232.2" fill="url(#g37)"/><polygon points="392,1223.7 409.9,1227.1 409.6,1241.3 392.2,1237.3" fill="url(#g38)"/><polygon points="416.3,1228.8 436.6,1232.8 435.5,1247 416.3,1242.5" fill="url(#g39)"/></g>
<g><polygon points="542.7,1176.2 650.8,1186.1 646.8,1228.8 543.8,1211.2" fill="#8f3a22" stroke="#6f2a16" stroke-width="0.7" stroke-linejoin="round"/><polygon points="541.9,1210.9 647.5,1228.8 647.3,1231.3 541.9,1213.1" fill="#8d6f5e"/><polygon points="545.5,1179.3 564.3,1181 564.9,1212.3 547.2,1208.9" fill="url(#g40)" stroke="#e7c4b8" stroke-width="0.8" stroke-linejoin="round"/><polygon points="567.7,1181.6 588.2,1183.5 588.2,1216.3 568.3,1212.7" fill="url(#g41)" stroke="#e7c4b8" stroke-width="0.8" stroke-linejoin="round"/><polygon points="592,1183.9 614.9,1186.1 614.4,1220.8 592.2,1216.9" fill="url(#g42)" stroke="#e7c4b8" stroke-width="0.8" stroke-linejoin="round"/><polygon points="619.3,1186.7 646.2,1189.2 644.5,1226 618.6,1221.4" fill="url(#g43)" stroke="#e7c4b8" stroke-width="0.8" stroke-linejoin="round"/></g>
<g><polygon points="175,1320.8 250.3,1321.5 245.2,1439.5 178.8,1423" fill="#e9e9eb" stroke="#f4f4f5" stroke-width="0.6" stroke-linejoin="round"/><polygon points="178,1323.4 246.7,1324.2 242.3,1434.6 181.8,1420.5" fill="#1e1e20"/><polygon points="178.8,1324.5 245.7,1325.5 241.5,1433.5 182.4,1419.8" fill="url(#g44)"/><line x1="193.4" y1="1323.6" x2="195.5" y2="1423.7" stroke="#1e1e20" stroke-width="1.6"/><line x1="209.8" y1="1323.8" x2="210.1" y2="1427.1" stroke="#1e1e20" stroke-width="1.6"/><line x1="227.5" y1="1324" x2="225.7" y2="1430.7" stroke="#1e1e20" stroke-width="1.6"/><line x1="178.9" y1="1344.7" x2="245.7" y2="1348.8" stroke="#1e1e20" stroke-width="1.6"/><line x1="179.6" y1="1365" x2="244.8" y2="1372" stroke="#1e1e20" stroke-width="1.6"/><line x1="180.4" y1="1384.4" x2="243.9" y2="1394" stroke="#1e1e20" stroke-width="1.6"/><line x1="181.1" y1="1402.8" x2="243.1" y2="1414.8" stroke="#1e1e20" stroke-width="1.6"/><polygon points="248.5,1321.5 250.3,1321.5 245.2,1439.5 243.6,1439.1" fill="#d2d2d4"/></g>
<g><polygon points="349.9,1338.8 459.1,1344.7 454.2,1421.9 353.3,1399.7" fill="#e9e9eb" stroke="#f4f4f5" stroke-width="0.6" stroke-linejoin="round"/><polygon points="354.1,1342 453.7,1347.3 450,1415.6 357.2,1396.8" fill="#1e1e20"/><polygon points="355.1,1342.6 452.1,1348 448.7,1414.7 358,1396.5" fill="url(#g45)"/><line x1="374.8" y1="1343.1" x2="376.7" y2="1400.8" stroke="#1e1e20" stroke-width="1.9"/><line x1="397.9" y1="1344.3" x2="398.4" y2="1405.2" stroke="#1e1e20" stroke-width="1.9"/><line x1="424" y1="1345.7" x2="422.7" y2="1410.1" stroke="#1e1e20" stroke-width="1.9"/><line x1="355.7" y1="1370.3" x2="451.8" y2="1382.8" stroke="#1e1e20" stroke-width="1.9"/><polygon points="455.7,1344.6 459.1,1344.7 454.2,1421.9 451.3,1421" fill="#d4d4d6"/><polygon points="353.3,1399.7 356.3,1397.4 450.8,1418 454.2,1421.9" fill="#f7f7f8"/></g>
<g><polygon points="549.2,1324 643.6,1324.9 638.3,1433.3 553.5,1414.1" fill="#9a452f" stroke="#7d3522" stroke-width="0.7" stroke-linejoin="round"/><polygon points="555.3,1331.6 630.9,1333.6 627.5,1424.1 558.6,1409.5" fill="#86392a"/><polygon points="551.9,1413.7 638.2,1430.8 636.6,1436.5 551.9,1416.2" fill="#efe9e6"/><polygon points="551.9,1415.5 636.8,1434.6 636.6,1436.5 551.9,1416.2" fill="#cfc4c0"/><polygon points="562.4,1332.5 632,1334.2 628.6,1418.5 564.9,1407.1" fill="#9a452f"/><polygon points="562.4,1332.5 632,1334.2 630.4,1375.4 563.6,1368.7" fill="url(#g46)"/><polygon points="565.1,1372 629.2,1378.9 628,1417.9 566,1406.5" fill="url(#g47)"/><line x1="572" y1="1332.8" x2="572.2" y2="1341.1" stroke="#9a452f" stroke-width="1.5"/><line x1="572.5" y1="1353.8" x2="572.8" y2="1369.7" stroke="#9a452f" stroke-width="1.5"/><polygon points="572.2,1341.1 577.7,1347.8 572.5,1353.8 567.1,1347.2" fill="none" stroke="#9a452f" stroke-width="1.5" stroke-linejoin="round"/><line x1="582.7" y1="1333" x2="582.8" y2="1341.6" stroke="#9a452f" stroke-width="1.5"/><line x1="582.9" y1="1354.5" x2="583.1" y2="1370.7" stroke="#9a452f" stroke-width="1.5"/><polygon points="582.8,1341.6 588.4,1348.4 582.9,1354.5 577.4,1347.8" fill="none" stroke="#9a452f" stroke-width="1.5" stroke-linejoin="round"/><line x1="593.1" y1="1333.3" x2="593.1" y2="1342" stroke="#9a452f" stroke-width="1.5"/><line x1="593.1" y1="1355.2" x2="593.2" y2="1371.7" stroke="#9a452f" stroke-width="1.5"/><polygon points="593.1,1342 599,1349 593.1,1355.2 587.4,1348.3" fill="none" stroke="#9a452f" stroke-width="1.5" stroke-linejoin="round"/><line x1="604.7" y1="1333.6" x2="604.6" y2="1342.5" stroke="#9a452f" stroke-width="1.5"/><line x1="604.5" y1="1355.9" x2="604.3" y2="1372.8" stroke="#9a452f" stroke-width="1.5"/><polygon points="604.6,1342.5 610.6,1349.6 604.5,1355.9 598.6,1348.9" fill="none" stroke="#9a452f" stroke-width="1.5" stroke-linejoin="round"/><line x1="617.7" y1="1333.9" x2="617.4" y2="1343" stroke="#9a452f" stroke-width="1.5"/><line x1="617.1" y1="1356.8" x2="616.6" y2="1374" stroke="#9a452f" stroke-width="1.5"/><polygon points="617.4,1343 623.6,1350.3 617.1,1356.8 611,1349.6" fill="none" stroke="#9a452f" stroke-width="1.5" stroke-linejoin="round"/><line x1="562.9" y1="1347" x2="567.1" y2="1347.2" stroke="#9a452f" stroke-width="1.5"/><line x1="623.6" y1="1350.3" x2="631.4" y2="1350.7" stroke="#9a452f" stroke-width="1.5"/></g></g></svg></div>
<div class="pg">
<div id="tb"></div>
<div class="tl" style="left:137.5px;background:#fc4646;"></div>
<div class="tl" style="left:177.5px;background:#e5b527;"></div>
<div class="tl" style="left:217.5px;background:#3cb930;"></div>

<!-- library segmented control 268..634 -->
<div class="seg" style="left:268px;width:76px;border-radius:9px 0 0 9px;"></div>
<div class="seg on" style="left:344px;width:72px;"></div>
<div class="seg" style="left:416px;width:72px;"></div>
<div class="seg" style="left:488px;width:71px;box-shadow:inset 1px 0 0 #4c4c4e;"></div>
<div class="seg" style="left:559px;width:75px;border-radius:0 9px 9px 0;box-shadow:inset 1px 0 0 #4c4c4e;"></div>
<svg class="abs" style="left:0;top:0" width="2624" height="160" viewBox="0 0 2624 160" fill="none" stroke="#fff" stroke-width="2">
  <!-- floor plan icon -->
  <rect x="293" y="101" width="10" height="10"/>
  <path d="M307 101H321V125H293V115H307Z"/>
  <!-- window icon (selected, dark) -->
  <g stroke="#29292b">
    <rect x="367.2" y="101.2" width="23.5" height="23.8"/>
    <path d="M379.2 101V125M367 113.2H391M364.3 125H393.7"/>
  </g>
  <!-- armchair icon -->
  <rect x="439" y="101" width="24" height="20.4"/>
  <path d="M437 114.3V124.8H465V114.3M436 115.3H440M462 115.3H466M439 125.5V128M463 125.5V128"/>
  <!-- tree icon -->
  <path d="M516.3 119.3 A6.3 6.3 0 0 1 515.2 106.8 A7 7 0 0 1 529.4 105.6 A6.6 6.6 0 0 1 529.6 119.3 Z" stroke-linejoin="round"/>
  <path d="M523 104.5V127M518.2 127H528M519.8 107.2L523 111.2M527.6 111.8L523 116.6" stroke-linecap="round"/>
  <!-- heart icon -->
  <path d="M594.8 125.2 C588 120.5 582.7 115.6 582.7 109.6 C582.7 105.4 585.8 102.4 589.4 102.4 C591.8 102.4 593.8 103.8 594.8 105.8 C595.8 103.8 597.8 102.4 600.2 102.4 C603.8 102.4 606.9 105.4 606.9 109.6 C606.9 115.6 601.6 120.5 594.8 125.2 Z" stroke-linejoin="round"/>
</svg>

<!-- 2D / 3D -->
<div class="seg on" style="left:1229px;width:84px;border-radius:9px 0 0 9px;"><span class="t26" style="left:25px;color:#27272a;">2D</span></div>
<div class="seg" style="left:1313px;width:82px;border-radius:0 9px 9px 0;"><span class="t26" style="left:21px;color:#fff;">3D</span></div>

<!-- feedback -->
<div class="btn" style="left:1680px;width:78px;"></div>
<!-- camera / ruler / polygon -->
<div class="btn" style="left:1854px;width:78px;"></div>
<div class="btn" style="left:1948px;width:78px;"></div>
<div class="btn" style="left:2042px;width:78px;"></div>
<!-- storey popup -->
<div class="btn" style="left:2136px;width:234px;"><span class="t26" style="left:52px;top:2.5px;font-size:26.5px;">一楼</span></div>
<!-- rotate -->
<div class="btn" style="left:2386px;width:110px;"><span class="t26" style="left:27.5px;top:2px;font-size:26.5px;">旋转</span></div>

<svg class="abs" style="left:0;top:0" width="2624" height="160" viewBox="0 0 2624 160" fill="none" stroke="#fff" stroke-width="2.1" stroke-linejoin="round">
  <!-- feedback bubble -->
  <path d="M1705 100.8H1733A2.2 2.2 0 0 1 1735.2 103V127.3L1730.6 123.2H1705A2.2 2.2 0 0 1 1702.9 121V103A2.2 2.2 0 0 1 1705 100.8Z"/>
  <path d="M1719 106V115M1719 116.2V118.4" stroke-width="2.4"/>
  <!-- camera -->
  <path d="M1879 105.2H1884.6L1887.6 101.2H1900.6L1903.6 105.2H1909A2.6 2.6 0 0 1 1911.6 107.8V124.3A2.6 2.6 0 0 1 1909 126.9H1879A2.6 2.6 0 0 1 1876.3 124.3V107.8A2.6 2.6 0 0 1 1879 105.2Z"/>
  <circle cx="1894" cy="115.6" r="7"/>
  <!-- ruler -->
  <rect x="1964.5" y="103.1" width="45.4" height="23.9" rx="3.5"/>
  <path d="M1970.1 114V126M1978.5 110V126M1986.8 114V126M1995.2 110V126M2003.5 114V126"/>
  <!-- polygon edit -->
  <path d="M2069.7 108V121.6M2072.9 124.8H2089.8M2093 121.6V108.3M2089.8 105.1H2075"/>
  <circle cx="2093" cy="105.1" r="2.7"/><circle cx="2093" cy="124.8" r="2.7"/><circle cx="2069.7" cy="124.8" r="2.7"/>
  <path d="M2065.6 102.8L2068.4 100L2084.4 114L2084 118L2080 117.6Z" stroke-width="1.9"/><path d="M2068.2 105.2L2070.8 102.4" stroke-width="1.5"/>
  <!-- layers -->
  <path d="M2164 100.2L2177 107.6L2164 115.2L2151 107.6Z"/>
  <path d="M2156 112.4L2151 115.2L2164 122.6L2177 115.2L2172 112.4"/>
  <path d="M2156 119.9L2151 122.7L2164 130L2177 122.7L2172 119.9L2164 124.4Z" fill="#a3a3a5"/>
  <!-- popup chevrons -->
  <path d="M2346.7 110.2L2352.6 103.9L2358.5 110.2M2346.7 117.9L2352.6 124.2L2358.5 117.9" stroke-width="2.6" stroke-linecap="round"/>
</svg>
</div>

<div id="edge"></div>
</div>
</body>
</html>
